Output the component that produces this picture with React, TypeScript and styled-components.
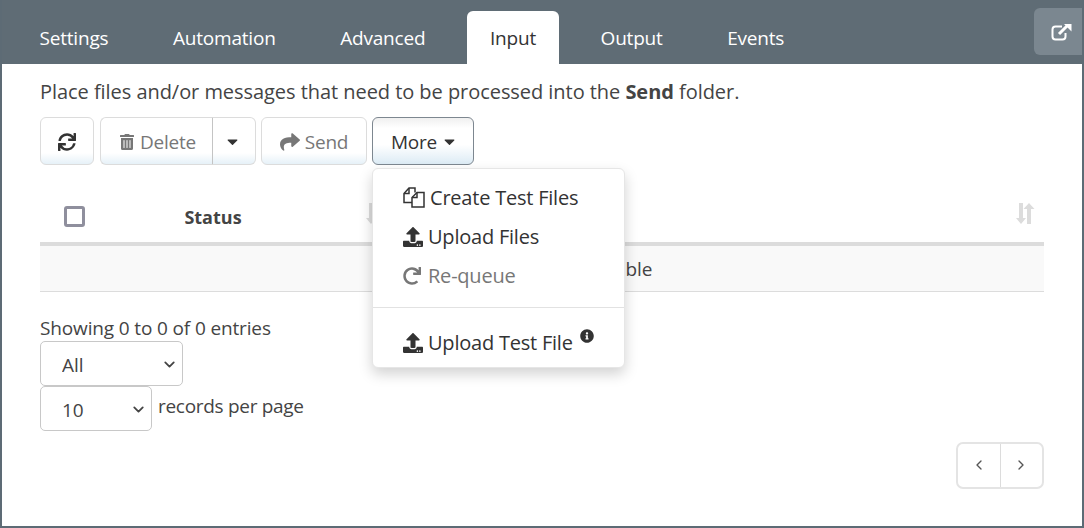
import styled, { createGlobalStyle } from "styled-components";
import {
  FaCaretDown,
  FaInfoCircle,
  FaRedo,
  FaShare,
  FaSync,
  FaTrashAlt,
  FaUpload,
} from "react-icons/fa";
import { LuChevronDown, LuChevronLeft, LuChevronRight } from "react-icons/lu";

const GlobalStyle = createGlobalStyle`
  html, body {
    margin: 0;
    padding: 0;
    background: #fff;
  }
  * {
    box-sizing: border-box;
  }
`;

const FONT = `"Open Sans", "Noto Sans", sans-serif`;

const SortIcon = () => (
  <svg width="20" height="21" viewBox="0 0 20 21" fill="#dcdcdc">
    <path d="M4 0h4v15h3L6 21 1 15h3z" />
    <path d="M12 21h4V6h3.500L14 0 8.500 6H12z" />
  </svg>
);

const ExternalIcon = () => (
  <svg width="21" height="18" viewBox="0 0 21 18" fill="none" stroke="#fff" strokeWidth="2">
    <path d="M11 3.500H4.500A3 3 0 0 0 1.500 6.500v7a3 3 0 0 0 3 3h7a3 3 0 0 0 3-3V10" />
    <path d="M8 11l8.500-8.500" strokeWidth="3" />
    <path d="M13 1h7.500v7.500z" fill="#fff" stroke="none" />
  </svg>
);

const FilesIcon = () => (
  <svg width="22" height="21" viewBox="0 0 22 21" fill="none" stroke="#333" strokeWidth="1.500">
    <path d="M9 15.500H1V6.500L6 1H12V5.500" />
    <path d="M6 1V6.500H1" />
    <path d="M14 5.500h7V20H9V10.500z" />
    <path d="M14 5.500v5H9" />
  </svg>
);

const Dropdown = ({ width, value }: { width: number; value: string }) => (
  <SelectBox $width={width}>
    <Select defaultValue={value}>
      <option>{value}</option>
    </Select>
    <SelectArrow>
      <LuChevronDown size={17} strokeWidth={2.5} />
    </SelectArrow>
  </SelectBox>
);

function App() {
  return (
    <>
      <GlobalStyle />
      <Frame>
        <TopBar>
          <Tab>Settings</Tab>
          <Tab>Automation</Tab>
          <Tab>Advanced</Tab>
          <Tab $active>Input</Tab>
          <Tab>Output</Tab>
          <Tab>Events</Tab>
          <PopOut>
            <ExternalIcon />
          </PopOut>
        </TopBar>
        <Content>
          <Intro>
            Place files and/or messages that need to be processed into the <b>Send</b> folder.
          </Intro>
          <Toolbar>
            <ToolButton $width={54}>
              <FaSync size={18} color="#333" />
            </ToolButton>
            <SplitGroup>
              <SplitMain disabled>
                <FaTrashAlt size={16} />
                Delete
              </SplitMain>
              <SplitCaret>
                <FaCaretDown size={17} color="#333" />
              </SplitCaret>
            </SplitGroup>
            <ToolButton $width={106} disabled>
              <FaShare size={20} />
              Send
            </ToolButton>
            <MoreWrap>
              <MoreButton>
                More
                <FaCaretDown size={17} />
              </MoreButton>
              <Menu>
                <MenuItem>
                  <FilesIcon />
                  Create Test Files
                </MenuItem>
                <MenuItem>
                  <FaUpload size={20} />
                  Upload Files
                </MenuItem>
                <MenuItem $disabled>
                  <FaRedo size={18} />
                  Re-queue
                </MenuItem>
                <MenuDivider />
                <MenuItem>
                  <FaUpload size={20} />
                  Upload Test File
                  <InfoMark>
                    <FaInfoCircle size={14} />
                  </InfoMark>
                </MenuItem>
              </Menu>
            </MoreWrap>
          </Toolbar>
          <DataTable>
            <thead>
              <tr>
                <CheckHead>
                  <Check type="checkbox" />
                </CheckHead>
                <StatusHead>
                  Status
                  <SortSlot>
                    <SortIcon />
                  </SortSlot>
                </StatusHead>
                <RestHead>
                  <SortSlot>
                    <SortIcon />
                  </SortSlot>
                </RestHead>
              </tr>
            </thead>
            <tbody>
              <tr>
                <EmptyCell colSpan={3}>No data available in table</EmptyCell>
              </tr>
            </tbody>
          </DataTable>
          <Summary>Showing 0 to 0 of 0 entries</Summary>
          <Dropdown width={143} value="All" />
          <PageSizeRow>
            <Dropdown width={112} value="10" />
            <PageSizeLabel>records per page</PageSizeLabel>
          </PageSizeRow>
          <Pager>
            <PagerButton>
              <LuChevronLeft size={16} />
            </PagerButton>
            <PagerButton>
              <LuChevronRight size={16} />
            </PagerButton>
          </Pager>
        </Content>
      </Frame>
    </>
  );
}

export default App;

const Frame = styled.div`
  width: 1084px;
  height: 528px;
  display: flex;
  flex-direction: column;
  border: 2px solid #5d6b75;
  border-top: 0;
  font-family: ${FONT};
  color: #444;
  overflow: hidden;
`;

const TopBar = styled.div`
  height: 64px;
  flex: none;
  display: flex;
  align-items: flex-end;
  gap: 18.6px;
  padding-left: 14.5px;
  background: #5f6c75;
`;

const Tab = styled.div<{ $active?: boolean }>`
  height: 53px;
  padding: 0 23px;
  display: flex;
  align-items: center;
  border-radius: 6px 6px 0 0;
  font-size: 19px;
  letter-spacing: -0.2px;
  color: ${(p) => (p.$active ? "#333" : "#fff")};
  background: ${(p) => (p.$active ? "#fff" : "transparent")};
`;

const PopOut = styled.div`
  width: 48px;
  height: 47px;
  margin: 0 0 9px auto;
  padding-left: 6px;
  display: flex;
  align-items: center;
  justify-content: center;
  border-radius: 6px 0 0 6px;
  background: #7b8790;
`;

const Content = styled.div`
  flex: 1;
  padding: 15px 38px 0;
  display: flex;
  flex-direction: column;
  background: #fff;
`;

const Intro = styled.div`
  height: 26px;
  font-size: 20px;
  line-height: 26px;
  letter-spacing: -0.05px;
  color: #444;
  white-space: nowrap;
`;

const Toolbar = styled.div`
  margin-top: 12px;
  display: flex;
  gap: 5px;
`;

const buttonFace = `
  height: 48px;
  display: flex;
  align-items: center;
  justify-content: center;
  gap: 5px;
  padding: 1px 0 0;
  font-family: ${FONT};
  font-size: 19px;
  letter-spacing: -0.2px;
  background: linear-gradient(to bottom, #fff 0%, #fff 76%, #e6f1f8 100%);
`;

const ToolButton = styled.button<{ $width: number }>`
  ${buttonFace}
  width: ${(p) => p.$width}px;
  border: 1px solid #dcdcdc;
  border-radius: 6px;
  color: #777;
`;

const SplitGroup = styled.div`
  display: flex;
  width: 156px;
  margin-left: 1px;
`;

const SplitMain = styled.button`
  ${buttonFace}
  width: 113px;
  padding-left: 2px;
  border: 1px solid #dcdcdc;
  border-right-color: #c4c4c4;
  border-radius: 6px 0 0 6px;
  color: #777;
`;

const SplitCaret = styled.button`
  ${buttonFace}
  flex: 1;
  padding-right: 4px;
  border: 1px solid #dcdcdc;
  border-left: 0;
  border-radius: 0 6px 6px 0;
`;

const MoreWrap = styled.div`
  position: relative;
`;

const MoreButton = styled.button`
  ${buttonFace}
  width: 102px;
  padding-left: 3px;
  gap: 4px;
  border: 1px solid #7d8790;
  border-radius: 6px;
  color: #333;
  background: linear-gradient(to bottom, #f0f0f0 0%, #fff 22%, #fff 58%, #dcebf5 100%);
`;

const Menu = styled.div`
  position: absolute;
  top: 51px;
  left: 0;
  width: 253px;
  height: 200px;
  padding-top: 9px;
  border-radius: 6px;
  background: #fff;
  border: 1px solid #e6e6e6;
  box-shadow: 0 6px 14px rgba(0, 0, 0, 0.18);
  z-index: 5;
`;

const MenuItem = styled.div<{ $disabled?: boolean }>`
  height: 39px;
  padding-left: 30px;
  display: flex;
  align-items: center;
  gap: ${(p) => (p.$disabled ? 7 : 5)}px;
  font-size: 20px;
  letter-spacing: -0.22px;
  white-space: nowrap;
  color: ${(p) => (p.$disabled ? "#777" : "#333")};
`;

const MenuDivider = styled.div`
  height: 1px;
  margin: 12px 0 15px;
  background: #e2e2e2;
`;

const InfoMark = styled.span`
  display: flex;
  margin: -14px 0 0 2px;
`;

const DataTable = styled.table`
  margin-top: 25px;
  width: 1004px;
  border-collapse: collapse;
  table-layout: fixed;
`;

const CheckHead = styled.th`
  width: 50px;
  height: 54px;
  padding: 0;
  border-bottom: 4px solid #dcdcdc;
`;

const Check = styled.input`
  appearance: none;
  display: block;
  width: 21px;
  height: 21px;
  margin: 0 0 0 24px;
  border: 3px solid #8f8f9d;
  border-radius: 3px;
  background: #fff;
`;

const StatusHead = styled.th`
  position: relative;
  width: 304px;
  padding: 2px 58px 0 0;
  font-size: 18px;
  font-weight: 700;
  text-align: center;
  color: #444;
  border-bottom: 4px solid #dcdcdc;
`;

const RestHead = styled.th`
  position: relative;
  padding: 0;
  border-bottom: 4px solid #dcdcdc;
`;

const SortSlot = styled.span`
  position: absolute;
  right: 9px;
  top: 13px;
`;

const EmptyCell = styled.td`
  height: 47px;
  padding: 1px 0 0;
  text-align: center;
  font-size: 19px;
  letter-spacing: -0.12px;
  color: #444;
  background: #f9f9f9;
  border-bottom: 1px solid #dcdcdc;
`;

const Summary = styled.div`
  margin-top: 24px;
  height: 25px;
  font-size: 19px;
  line-height: 24px;
  letter-spacing: -0.14px;
`;

const SelectBox = styled.div<{ $width: number }>`
  position: relative;
  width: ${(p) => p.$width}px;
  height: 45px;
  flex: none;
`;

const Select = styled.select`
  appearance: none;
  display: block;
  width: 100%;
  height: 100%;
  padding: 3px 0 0 21px;
  border: 1px solid #c8c8c8;
  border-radius: 5px;
  background: #fff;
  font-family: ${FONT};
  font-size: 19px;
  color: #444;
`;

const SelectArrow = styled.span`
  position: absolute;
  top: 15px;
  right: 5px;
  display: flex;
  color: #444;
`;

const PageSizeRow = styled.div`
  display: flex;
  align-items: flex-start;
  gap: 6px;
`;

const PageSizeLabel = styled.span`
  margin-top: 8px;
  font-size: 19px;
  line-height: 24px;
  letter-spacing: -0.3px;
`;

const Pager = styled.div`
  margin: 11px 0 0 auto;
  width: 88px;
  height: 47px;
  display: flex;
  border: 2px solid #e4e4e4;
  border-radius: 7px;
`;

const PagerButton = styled.div`
  flex: 1;
  display: flex;
  align-items: center;
  justify-content: center;
  color: #555;
  & + & {
    border-left: 1px solid #dcdcdc;
  }
`;
